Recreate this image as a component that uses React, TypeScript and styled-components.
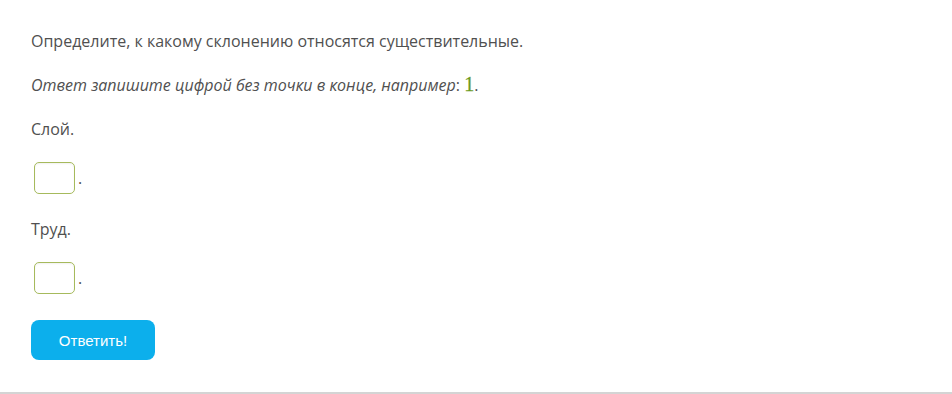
import React from 'react';
import styled, { createGlobalStyle } from 'styled-components';

const GlobalStyle = createGlobalStyle`
    html, body {
        margin: 0;
        padding: 0;
        background: #fff;
    }
`;

const Task = styled.div`
    font-family: 'Open Sans', 'Noto Sans', sans-serif;
    font-size: 16px;
    line-height: 22px;
    color: #505050;
    padding: 30px 31px 32px 31px;
    border-bottom: 2px solid #d4d4d4;
    display: flex;
    flex-direction: column;
    align-items: flex-start;
`;

const Text = styled.p<{ gap?: number }>`
    margin: 0 0 ${props => props.gap ?? 22}px 0;
`;

const Hint = styled(Text)`
    font-style: italic;
`;

const Upright = styled.span`
    font-style: normal;
`;

const Digit = styled.span`
    font-family: 'Liberation Serif', 'DejaVu Serif', serif;
    font-style: normal;
    font-size: 20px;
    color: #6b9a1c;
    -webkit-text-stroke: 0.3px #6b9a1c;
`;

const AnswerRow = styled.div<{ gap: number }>`
    display: flex;
    align-items: center;
    padding-left: 3px;
    margin-bottom: ${props => props.gap}px;
`;

const AnswerBox = styled.input`
    width: 41px;
    height: 32px;
    box-sizing: border-box;
    border: 1px solid #a6ba5c;
    border-radius: 5px;
    box-shadow: inset 0 1px 2px rgba(0, 0, 0, 0.06);
    padding: 0 4px;
    font-family: inherit;
    font-size: 15px;
    outline: none;
`;

const Dot = styled.span`
    margin-left: 3px;
    line-height: 20px;
`;

const SubmitButton = styled.button`
    width: 124px;
    height: 40px;
    border: none;
    border-radius: 8px;
    background: #0cafec;
    color: #fff;
    font-family: 'Liberation Sans', Arial, sans-serif;
    font-size: 15px;
    cursor: pointer;
`;

export default function App() {
    return (
        <>
            <GlobalStyle />
            <Task>
                <Text gap={21}>Определите, к какому склонению относятся существительные.</Text>
                <Hint gap={22}>
                    Ответ запишите цифрой без точки в конце, например<Upright>:</Upright> <Digit>1</Digit><Upright>.</Upright>
                </Hint>
                <Text gap={22}>Слой.</Text>
                <AnswerRow gap={24}>
                    <AnswerBox type="text" />
                    <Dot>.</Dot>
                </AnswerRow>
                <Text gap={22}>Труд.</Text>
                <AnswerRow gap={26}>
                    <AnswerBox type="text" />
                    <Dot>.</Dot>
                </AnswerRow>
                <SubmitButton>Ответить!</SubmitButton>
            </Task>
        </>
    );
}
